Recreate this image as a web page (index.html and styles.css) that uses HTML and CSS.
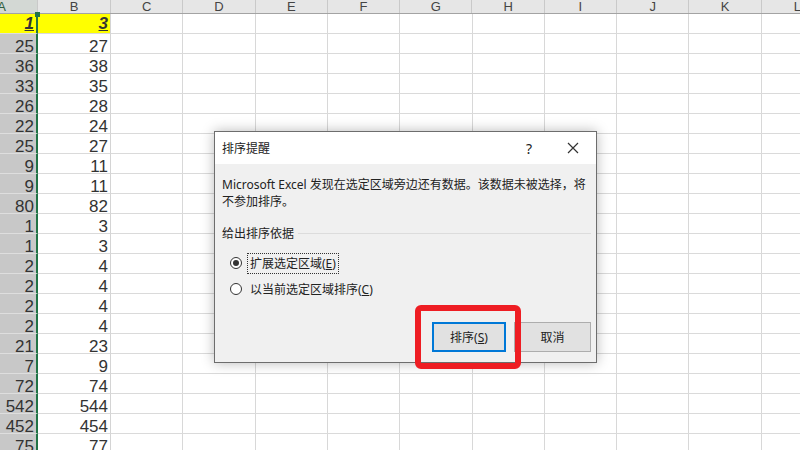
FILE: index.html
```html
<!DOCTYPE html>
<html>
   <head>
      <title>排序提醒</title>
      <link rel="stylesheet" href="styles.css">
   </head>
   <body>

   <div class="sheet">
      <div class="cols">
         <span class="sel">A</span><span>B</span><span>C</span><span>D</span>
         <span>E</span><span>F</span><span>G</span><span>H</span>
         <span>I</span><span>J</span><span>K</span><span>L</span>
      </div>
      <div class="row first"><span class="a">1</span><span class="b">3</span><span class="rest"></span></div>
      <div class="row"><span class="a">25</span><span class="b">27</span><span class="rest"></span></div>
      <div class="row"><span class="a">36</span><span class="b">38</span><span class="rest"></span></div>
      <div class="row"><span class="a">33</span><span class="b">35</span><span class="rest"></span></div>
      <div class="row"><span class="a">26</span><span class="b">28</span><span class="rest"></span></div>
      <div class="row"><span class="a">22</span><span class="b">24</span><span class="rest"></span></div>
      <div class="row"><span class="a">25</span><span class="b">27</span><span class="rest"></span></div>
      <div class="row"><span class="a">9</span><span class="b">11</span><span class="rest"></span></div>
      <div class="row"><span class="a">9</span><span class="b">11</span><span class="rest"></span></div>
      <div class="row"><span class="a">80</span><span class="b">82</span><span class="rest"></span></div>
      <div class="row"><span class="a">1</span><span class="b">3</span><span class="rest"></span></div>
      <div class="row"><span class="a">1</span><span class="b">3</span><span class="rest"></span></div>
      <div class="row"><span class="a">2</span><span class="b">4</span><span class="rest"></span></div>
      <div class="row"><span class="a">2</span><span class="b">4</span><span class="rest"></span></div>
      <div class="row"><span class="a">2</span><span class="b">4</span><span class="rest"></span></div>
      <div class="row"><span class="a">2</span><span class="b">4</span><span class="rest"></span></div>
      <div class="row"><span class="a">21</span><span class="b">23</span><span class="rest"></span></div>
      <div class="row"><span class="a">7</span><span class="b">9</span><span class="rest"></span></div>
      <div class="row"><span class="a">72</span><span class="b">74</span><span class="rest"></span></div>
      <div class="row"><span class="a">542</span><span class="b">544</span><span class="rest"></span></div>
      <div class="row"><span class="a">452</span><span class="b">454</span><span class="rest"></span></div>
      <div class="row"><span class="a">75</span><span class="b">77</span><span class="rest"></span></div>
   </div>
   <div class="handle"></div>

   <div class="dialog">
      <div class="titlebar">
         <span class="title">排序提醒</span>
         <span class="help">?</span>
         <span class="close">
            <svg width="12" height="12" viewBox="0 0 12 12"><path d="M1 1L11 11M11 1L1 11" stroke="#333" stroke-width="1.2" fill="none"/></svg>
         </span>
      </div>
      <div class="body">
         <p class="msg">Microsoft Excel 发现在选定区域旁边还有数据。该数据未被选择，将<br>不参加排序。</p>
         <div class="group"><span>给出排序依据</span><i class="rule"></i></div>
         <div class="opt"><span class="radio on"></span><span class="label focus">扩展选定区域(<u>E</u>)</span></div>
         <div class="opt"><span class="radio"></span><span class="label">以当前选定区域排序(<u>C</u>)</span></div>
         <div class="buttons">
            <span class="btn default">排序(<u>S</u>)</span>
            <span class="btn cancel">取消</span>
         </div>
      </div>
   </div>
   <div class="mark"></div>
   </body>
</html>
```

FILE: styles.css
```css
body { margin:0; width:800px; height:450px; overflow:hidden; position:relative;
       background:#fff; font-family:"Liberation Sans", Arial, sans-serif; }

/* worksheet, scrolled a little to the right so column A is cut */
.sheet { margin-left:-32px; }
.cols { display:grid; grid-template-columns:70px 73px repeat(10, 72.3px);
        height:14px; box-sizing:border-box; background:#e6e6e6;
        border-bottom:1px solid #a3a3a3; overflow:hidden; }
.cols span { border-right:1px solid #c9c9c9; text-align:center; font-size:13px;
             line-height:13px; color:#444; }
.cols .sel { background:#d3d8d4; color:#2f5e40; text-align:right; padding-right:31px; }

.row { display:grid; grid-template-columns:70px 73px 1fr; height:20px; }
.row span { box-sizing:border-box; height:20px; border-bottom:1px solid #dadada;
            text-align:right; padding:3px 2px 0 0; line-height:19px; color:#333;
            font-family:"Liberation Sans Narrow", "Liberation Sans", Arial, sans-serif;
            font-size:17px; }
.row .a { background:#c8c8c8; border-right:2px solid #217346; border-bottom-color:#dedede; }
.row .b { border-right:1px solid #d4d4d4; }
.row .rest { padding:0;
   background:repeating-linear-gradient(to right, transparent 0 71.3px, #d8d8d8 71.3px 72.3px); }
.first .a, .first .b { background:#ffff00; font-style:italic; font-weight:bold;
                       text-decoration:underline; padding-top:0; }
.handle { position:absolute; left:35px; top:12px; width:5px; height:5px; background:#217346; }

/* sort warning dialog */
.dialog { position:absolute; left:214px; top:131px; width:383px; height:232px;
          box-sizing:border-box; border:1px solid #6d6d6d; background:#f0f0f0;
          box-shadow:0 0 12px rgba(0,0,0,0.28);
          font-family:"Noto Sans", "Noto Sans CJK SC", sans-serif; font-size:12px; color:#222; }
.titlebar { display:flex; align-items:center; height:32px; background:#fff; }
.title { flex:1; padding-left:7px; }
.help { width:30px; text-align:center; font-size:14px; margin-right:6px; }
.close { width:46px; display:flex; justify-content:center; }
.body { padding:12px 5px 10px 7px; }
.msg { margin:0; line-height:17px; }
.group { display:flex; align-items:center; margin-top:15px; line-height:17px; }
.rule { flex:1; height:1px; background:#dcdcdc; margin-left:4px; }
.opt { display:flex; align-items:center; height:26px; padding-left:8px; }
.group + .opt { margin-top:8px; }
.radio { width:12px; height:12px; box-sizing:border-box; border:1px solid #333;
         border-radius:50%; background:#fff; margin-right:5px; position:relative; }
.radio.on::after { content:""; position:absolute; left:2px; top:2px; width:6px; height:6px;
                   border-radius:50%; background:#333; }
.label { padding:1px 2px; border:1px dotted transparent; line-height:17px; }
.label.focus { border-color:#333; }
.buttons { display:flex; justify-content:flex-end; gap:8px; margin-top:20px; }
.btn { height:30px; box-sizing:border-box; display:flex; align-items:center;
       justify-content:center; background:#e1e1e1; border:1px solid #adadad; }
.btn.default { width:74px; border:2px solid #0078d7; }
.btn.cancel { width:77px; }

/* red annotation around the sort button */
.mark { position:absolute; left:415px; top:305px; width:106px; height:64px; box-sizing:border-box;
        border:6px solid #ee1d23; border-radius:6px; }
```
